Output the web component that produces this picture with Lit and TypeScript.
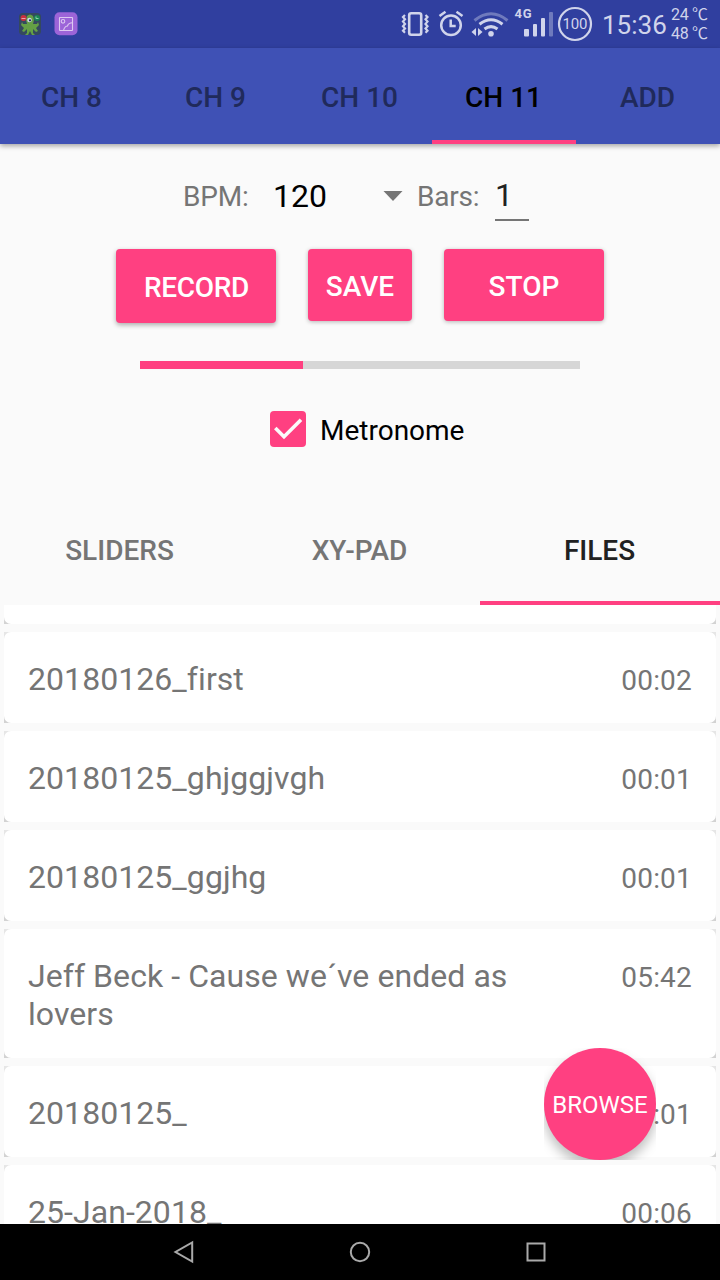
import { LitElement, html, css, svg } from "lit";
import { customElement } from "lit/decorators.js";
import { classMap } from "lit/directives/class-map.js";

const base = css`
  :host {
    display: block;
    font-family: Roboto, "Noto Sans CJK SC", sans-serif;
  }
  * { box-sizing: border-box; }
  svg { display: block; flex: none; }
`;

@customElement("status-bar")
class StatusBar extends LitElement {
  static styles = [base, css`
    .bar { height: 48px; background: #303f9f; display: flex; padding-left: 19px; color: #d0d4eb; }
    .icons { margin-left: 323px; }
    .clock { font-size: 26px; line-height: 50px; width: 68px; margin-left: 1px; white-space: nowrap; }
    .temps { font-size: 16px; line-height: 19px; padding-top: 5px; margin-left: 1px; letter-spacing: -.3px; white-space: nowrap; }
    .net { font-weight: 700; font-size: 13px; }
    .pct { font-size: 15px; }
  `];
  render() {
    return html`<div class="bar">
      <svg width="59" height="48" viewBox="19 0 59 48">
        <rect x="19" y="13" width="22" height="22" rx="4" fill="#34495e"/>
        <path d="M27 16q3-3 6 0l1 4-1 4 4 0 1-2 1 3-3 3 2 3-2 1-3-3 0 4 2 2h-3l-2-4-2 4h-3l2-2 0-4-3 3-2-1 2-3-3-3 1-3 1 2 4 0-1-4z" fill="#64a045"/>
        <circle cx="23.500" cy="18" r="3" fill="#c9303f"/><path d="M21.500 18.500h4" stroke="#e5a5a8"/>
        <circle cx="37" cy="18" r="3" fill="#178553"/><path d="M36 16.500v2h2.500" stroke="#8cc9ab" fill="none"/>
        <circle cx="29.500" cy="20" r="2.300" fill="#ccd6ea"/><circle cx="30" cy="20.300" r="1.100" fill="#1d2d52"/>
        <rect x="54.500" y="12.300" width="23" height="23" rx="5" fill="#9c64d8"/>
        <g fill="none" stroke="#dcc8f1" stroke-width="1.100"><rect x="59.500" y="17.500" width="13" height="13" rx=".5"/><circle cx="63" cy="21.300" r="1.800"/><path d="M63.500 30.500c1-3.500 2-4.500 4-4.500.5-2 2-3.300 5-3.300"/></g>
      </svg>
      <svg class="icons" width="200" height="48" viewBox="401 0 200 48" fill="none" stroke="#d0d4eb">
        <rect x="409.200" y="13.200" width="12" height="21.600" rx="2" stroke-width="2.600"/>
        <path d="M405 15l-2 2 2 2.300-2 2.300 2 2.300-2 2.300 2 2.300-2 2.300 2 2M425.500 15l2 2-2 2.300 2 2.300-2 2.300 2 2.300-2 2.300 2 2.300-2 2" stroke-width="2.200"/>
        <circle cx="451" cy="25.200" r="9.800" stroke-width="2.500"/>
        <path d="M450.700 19.500v6.500h5M439.500 16l6-4.300M462.500 16l-6-4.300" stroke-width="2.500"/>
        <path d="M474.500 20.500q16.500-13.500 33 0" stroke-width="3" opacity=".4"/>
        <path d="M479.500 24.200q11.500-9 23 0M484.500 29q6.500-4.800 13 0" stroke-width="3"/>
        <circle cx="491" cy="33.800" r="2.800" fill="#d0d4eb" stroke="none"/>
        <path d="M476 28v8l-4.500-4zM478 28v8l4.500-4z" fill="#d0d4eb" stroke="none"/>
        <g fill="#d0d4eb" stroke="none">
          <rect x="524" y="29" width="5" height="7.500" rx="1"/><rect x="533" y="24" width="4" height="12.500" rx="1"/><rect x="541" y="18" width="4" height="18.500" rx="1"/>
          <rect x="549" y="12" width="4" height="24.500" rx="1" opacity=".4"/>
          <text class="net" x="514.500" y="18" textLength="17">4G</text>
          <text class="pct" x="562.500" y="29.300" textLength="25">100</text>
        </g>
        <circle cx="575" cy="24" r="16" stroke-width="2.200"/>
      </svg>
      <div class="clock">15:36</div>
      <div class="temps"><div>24 ℃</div><div>48 ℃</div></div>
    </div>`;
  }
}

@customElement("channel-tabs")
class ChannelTabs extends LitElement {
  static styles = [base, css`
    :host { position: relative; z-index: 1; }
    .tabs { display: grid; grid-template-columns: repeat(5, 1fr); height: 96px; background: #3f51b5; box-shadow: 0 2px 5px rgba(0,0,0,.35); }
    .tab { font-size: 28px; font-weight: 500; line-height: 99px; text-align: center; color: #202a5b; height: 96px; padding-right: 1px; }
    .on { color: #000; border-bottom: 4px solid #ff4081; }
  `];
  render() {
    return html`<div class="tabs">${["CH 8", "CH 9", "CH 10", "CH 11", "ADD"].map(
      (t) => html`<div class=${classMap({ tab: true, on: t === "CH 11" })}>${t}</div>`)}</div>`;
  }
}

@customElement("record-panel")
class RecordPanel extends LitElement {
  static styles = [base, css`
    .fields { display: flex; height: 105px; padding-left: 183px; font-size: 28px; line-height: 105px; color: #757575; }
    .bpm { width: 90px; letter-spacing: -.2px; }
    .value { width: 110px; font-size: 32px; line-height: 104px; color: #000; }
    .arrow { margin: 46px 14px 0 0; }
    .bars { width: 78px; letter-spacing: -.2px; }
    .input { width: 34px; height: 77px; font-size: 32px; line-height: 102px; color: #212121; border-bottom: 2px solid #757575; }
    .buttons { display: flex; gap: 32px; padding-left: 116px; align-items: flex-start; height: 112px; }
    .btn { width: 160px; height: 72px; border-radius: 4px; background: #ff4081; color: #fff; font-size: 28px; font-weight: 500; line-height: 75px; text-align: center; box-shadow: 0 1px 4px rgba(0,0,0,.28); }
    .record { height: 74px; line-height: 77px; letter-spacing: -.3px; padding-left: 1px; box-shadow: 0 2px 5px rgba(0,0,0,.32); }
    .save { width: 104px; }
    .track { width: 440px; height: 8px; margin: 0 auto; background: #d6d6d6; }
    .fill { height: 8px; background: #ff4081; }
    .check { display: flex; padding: 42px 0 0 270px; font-size: 28px; line-height: 40px; color: #000; gap: 14px; height: 128px; }
  `];
  render() {
    const progress = 163 / 440;
    return html`
      <div class="fields">
        <span class="bpm">BPM:</span><span class="value">120</span>
        <svg class="arrow" width="20" height="11" viewBox="0 0 20 11"><path d="M.5 1h19l-9.500 10z" fill="#757575"/></svg>
        <span class="bars">Bars:</span><span class="input">1</span>
      </div>
      <div class="buttons">
        <div class="btn record">RECORD</div><div class="btn save">SAVE</div><div class="btn">STOP</div>
      </div>
      <div class="track"><div class="fill" style="width:${progress * 100}%"></div></div>
      <div class="check">
        <svg width="36" height="36" viewBox="0 0 36 36"><rect width="36" height="36" rx="4" fill="#ff4081"/><path d="M5.300 17l8.700 8.700L31 8.700" fill="none" stroke="#fafafa" stroke-width="3.600"/></svg>
        <span>Metronome</span>
      </div>`;
  }
}

@customElement("panel-tabs")
class PanelTabs extends LitElement {
  static styles = [base, css`
    .tabs { display: grid; grid-template-columns: repeat(3, 1fr); height: 108px; }
    .tab { height: 108px; font-size: 28px; font-weight: 500; line-height: 107px; text-align: center; color: #757575; padding-right: 1px; }
    .on { color: #212121; border-bottom: 4px solid #ff4081; }
  `];
  render() {
    return html`<div class="tabs">${["SLIDERS", "XY-PAD", "FILES"].map(
      (t) => html`<div class=${classMap({ tab: true, on: t === "FILES" })}>${t}</div>`)}</div>`;
  }
}

const files = [
  ["20180126_first", "00:02"],
  ["20180125_ghjggjvgh", "00:01"],
  ["20180125_ggjhg", "00:01"],
  ["Jeff Beck - Cause we´ve ended as lovers", "05:42"],
  ["20180125_", "00:01"],
  ["25-Jan-2018_", "00:06"],
];

@customElement("file-list")
class FileList extends LitElement {
  static styles = [base, css`
    .list { height: 619px; overflow: hidden; display: flex; flex-direction: column; gap: 8px; padding: 0 4px; position: relative; }
    .wrap { flex: none; background: linear-gradient(#e6e6e6, #d2d2d2); }
    .card { background: #fff; border-radius: 7px; min-height: 91px; padding: 28px 24px 25px; display: flex; justify-content: space-between; align-items: baseline; color: #757575; }
    .cut { min-height: 19px; height: 19px; padding: 0; border-radius: 0 0 7px 7px; }
    .name { font-size: 32px; line-height: 38px; width: 510px; letter-spacing: .06px; }
    .time { font-size: 28px; line-height: 30px; letter-spacing: .2px; }
    .clip { position: absolute; left: 544px; top: 443px; width: 112px; height: 112px; overflow: hidden; }
    .browse { width: 112px; height: 112px; border-radius: 50%; background: #ff4081; color: #fff; font-size: 24px; line-height: 115px; text-align: center; box-shadow: 0 7px 12px rgba(0,0,0,.26); }
  `];
  render() {
    return html`<div class="list">
      <div class="wrap"><div class="card cut"></div></div>
      ${files.map(([name, time]) => html`<div class="wrap"><div class="card">
        <span class="name">${name}</span><span class="time">${time}</span></div></div>`)}
      <div class="clip"><div class="browse">BROWSE</div></div>
    </div>`;
  }
}

@customElement("app-root")
class AppRoot extends LitElement {
  static styles = [base, css`
    .screen { width: 720px; height: 1280px; background: #fafafa; display: flex; flex-direction: column; overflow: hidden; }
    .nav { height: 56px; background: #000; display: flex; justify-content: space-between; align-items: center; padding: 0 172px; }
  `];
  render() {
    return html`<div class="screen">
      <status-bar></status-bar>
      <channel-tabs></channel-tabs>
      <record-panel></record-panel>
      <panel-tabs></panel-tabs>
      <file-list></file-list>
      <div class="nav">
        ${[svg`<path d="M20.200 2.500v19L3.500 12z"/>`, svg`<circle cx="12" cy="12" r="9.200"/>`, svg`<rect x="3.500" y="3.500" width="17" height="17"/>`].map(
          (s) => html`<svg width="24" height="24" viewBox="0 0 24 24" fill="none" stroke="#a9a9a9" stroke-width="2">${s}</svg>`)}
      </div>
    </div>`;
  }
}
